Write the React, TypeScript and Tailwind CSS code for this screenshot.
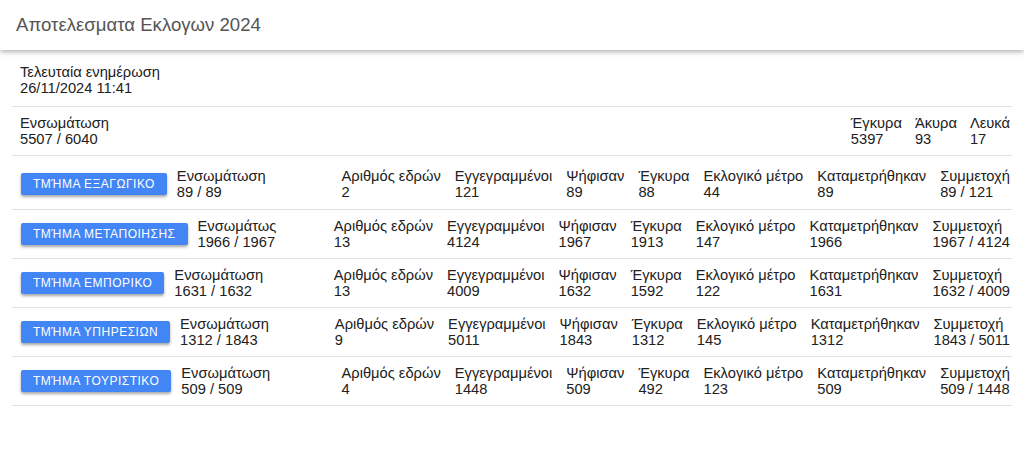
import React from 'react';

interface Department {
  name: string;
  incLabel: string;
  inc: string;
  seats: string;
  registered: string;
  voted: string;
  valid: string;
  quota: string;
  counted: string;
  turnout: string;
}

const departments: Department[] = [
  { name: 'ΤΜΉΜΑ ΕΞΑΓΩΓΙΚΟ', incLabel: 'Ενσωμάτωση', inc: '89 / 89', seats: '2', registered: '121', voted: '89', valid: '88', quota: '44', counted: '89', turnout: '89 / 121' },
  { name: 'ΤΜΉΜΑ ΜΕΤΑΠΟΙΗΣΗΣ', incLabel: 'Ενσωμάτως', inc: '1966 / 1967', seats: '13', registered: '4124', voted: '1967', valid: '1913', quota: '147', counted: '1966', turnout: '1967 / 4124' },
  { name: 'ΤΜΉΜΑ ΕΜΠΟΡΙΚΟ', incLabel: 'Ενσωμάτωση', inc: '1631 / 1632', seats: '13', registered: '4009', voted: '1632', valid: '1592', quota: '122', counted: '1631', turnout: '1632 / 4009' },
  { name: 'ΤΜΉΜΑ ΥΠΗΡΕΣΙΩΝ', incLabel: 'Ενσωμάτωση', inc: '1312 / 1843', seats: '9', registered: '5011', voted: '1843', valid: '1312', quota: '145', counted: '1312', turnout: '1843 / 5011' },
  { name: 'ΤΜΉΜΑ ΤΟΥΡΙΣΤΙΚΟ', incLabel: 'Ενσωμάτωση', inc: '509 / 509', seats: '4', registered: '1448', voted: '509', valid: '492', quota: '123', counted: '509', turnout: '509 / 1448' },
];

const Stat: React.FC<{ label: string; value: string }> = ({ label, value }) => (
  <div className="flex flex-col whitespace-nowrap">
    <span>{label}</span>
    <span>{value}</span>
  </div>
);

export default function App() {
  return (
    <div className="min-h-screen bg-white text-[14.7px] leading-4 text-[#212121]" style={{ fontFamily: '"Liberation Sans", Arial, sans-serif' }}>
      {/* Toolbar */}
      <div className="h-[50px] flex items-center px-4 bg-white shadow-[0_2px_5px_rgba(0,0,0,0.3)] relative z-10">
        <h1 className="text-[18.6px] text-[#555] font-normal">Αποτελεσματα Εκλογων 2024</h1>
      </div>

      <div className="mx-3">
        {/* Last update */}
        <div className="pt-[14px] pb-[10px] pl-2 border-b border-[#e0e0e0]">
          <Stat label="Τελευταία ενημέρωση" value="26/11/2024 11:41" />
        </div>

        {/* Totals */}
        <div className="flex justify-between py-2 pl-2 pr-0.5 border-b border-[#e0e0e0]">
          <Stat label="Ενσωμάτωση" value="5507 / 6040" />
          <div className="flex gap-[13px]">
            <Stat label="Έγκυρα" value="5397" />
            <Stat label="Άκυρα" value="93" />
            <Stat label="Λευκά" value="17" />
          </div>
        </div>

        {/* Departments */}
        {departments.map((d, i) => (
          <div
            key={d.name}
            className={`flex items-center justify-between pl-2 pr-0.5 border-b border-[#e0e0e0] ${i === 0 ? 'pt-3 pb-[9px]' : 'py-2'}`}
          >
            <div className="flex items-center gap-[10px]">
              <button className="h-[22px] ml-px px-3 bg-[#4285f4] text-white text-[12px] tracking-[0.5px] rounded-[2px] shadow-[0_2px_3px_rgba(0,0,0,0.35)] whitespace-nowrap">
                {d.name}
              </button>
              <Stat label={d.incLabel} value={d.inc} />
            </div>
            <div className="flex gap-[14px]">
              <Stat label="Αριθμός εδρών" value={d.seats} />
              <Stat label="Εγγεγραμμένοι" value={d.registered} />
              <Stat label="Ψήφισαν" value={d.voted} />
              <Stat label="Έγκυρα" value={d.valid} />
              <Stat label="Εκλογικό μέτρο" value={d.quota} />
              <Stat label="Καταμετρήθηκαν" value={d.counted} />
              <Stat label="Συμμετοχή" value={d.turnout} />
            </div>
          </div>
        ))}
      </div>
    </div>
  );
}
